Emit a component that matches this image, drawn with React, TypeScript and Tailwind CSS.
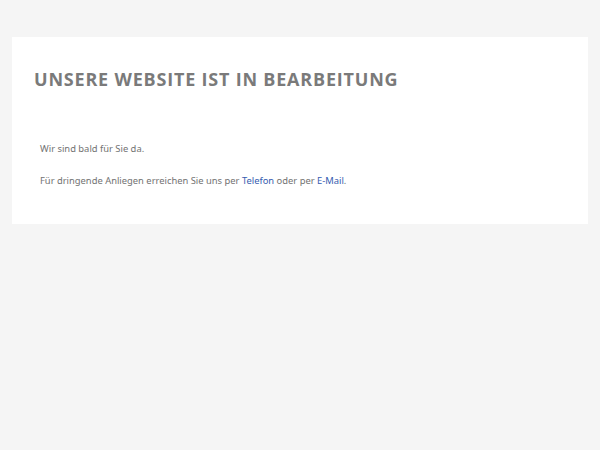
export default function App() {
  return (
    <div className="min-h-[450px] bg-[#f5f5f5] pt-[37px] px-3">
      <div className="bg-white h-[187px] pl-[22px] pt-[29px]">
        <h1 className="text-[18px] leading-[26px] font-bold text-[#7a7a7a] uppercase font-['Open_Sans',sans-serif] tracking-[0.8px]">
          Unsere Website ist in Bearbeitung
        </h1>
        <div className="pl-[6px] pt-[50px] font-['Noto_Sans',sans-serif] text-[9.4px] text-[#727272]">
          <p className="leading-[14px]">Wir sind bald für Sie da.</p>
          <p className="leading-[14px] mt-[18px]">
            Für dringende Anliegen erreichen Sie uns per{" "}
            <a className="text-[#355cb0]">Telefon</a> oder per{" "}
            <a className="text-[#355cb0]">E-Mail</a>.
          </p>
        </div>
      </div>
    </div>
  );
}
